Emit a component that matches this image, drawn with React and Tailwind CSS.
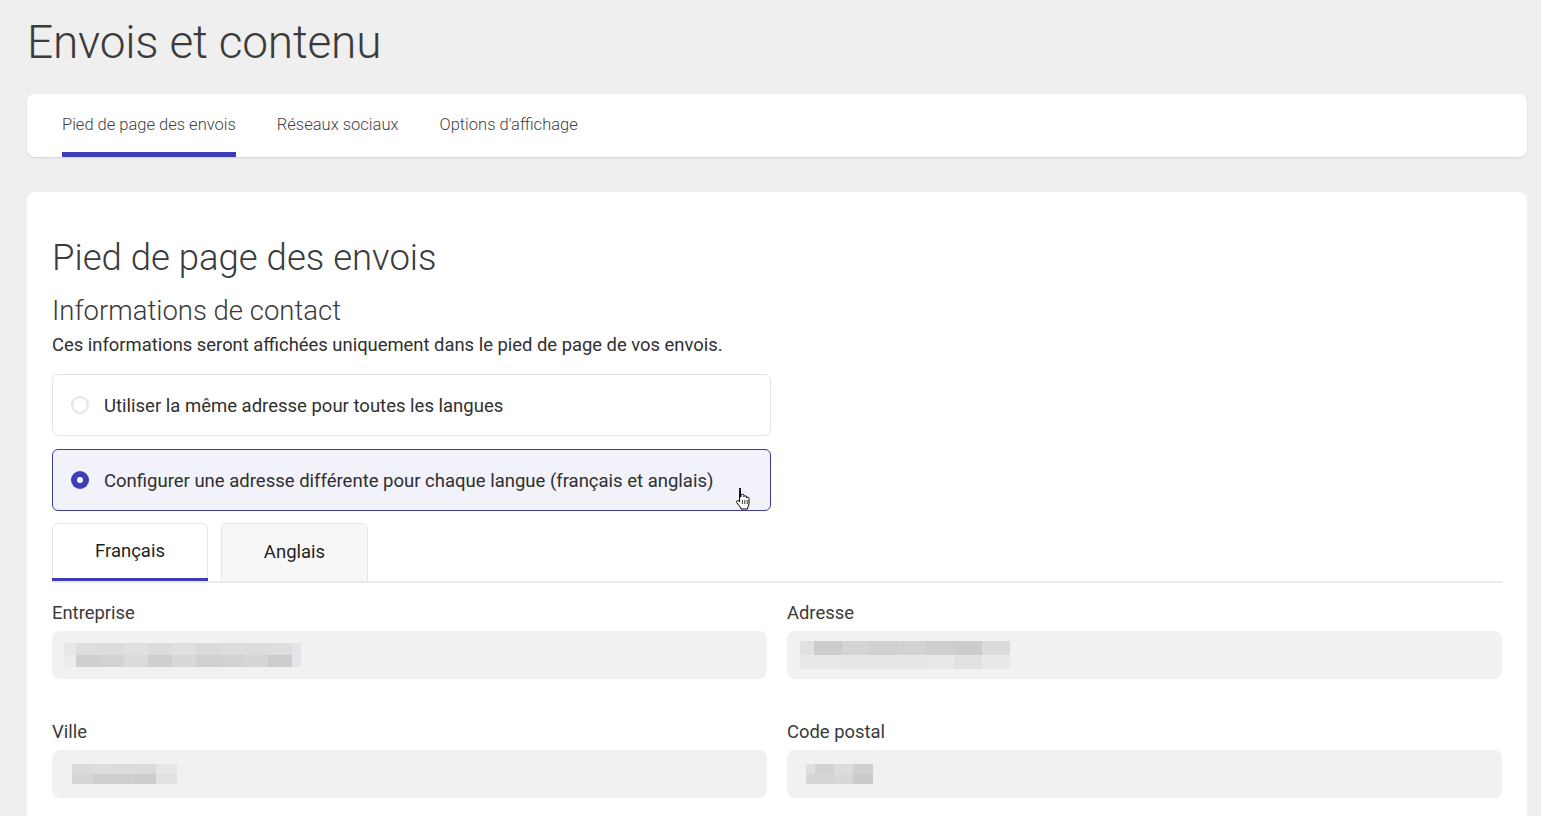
import React from 'react';

const font = { fontFamily: 'Roboto, "Liberation Sans", sans-serif' };

// pixelated placeholder blocks (blurred values in the screenshot)
const Pixels = ({ rows, widths, h = 12 }) => (
  <div className="flex flex-col">
    {rows.map((row, i) => (
      <div key={i} className="flex">
        {row.map((c, j) => (
          <div key={j} style={{ background: c, width: widths[j], height: h }} />
        ))}
      </div>
    ))}
  </div>
);

const Field = ({ label, children }) => (
  <div className="flex flex-col">
    <label className="text-[18.4px] text-[#3a3a3a] leading-[22px] mb-[7px] mt-[1px]">{label}</label>
    <div className="h-[48px] rounded-[8px] bg-[#f1f1f1] flex items-center">{children}</div>
  </div>
);

const HandCursor = () => (
  <svg width="18" height="24" viewBox="0 0 18 24" className="absolute right-[18px] top-[37px]">
    <path
      d="M5 1.5c.9 0 1.5.6 1.5 1.5v7l.5-.2V8.5c0-.8.6-1.4 1.4-1.4s1.4.6 1.4 1.4v1.2c.2-.6.7-1 1.3-1 .8 0 1.4.6 1.4 1.4v.9c.2-.5.7-.8 1.2-.8.8 0 1.3.6 1.3 1.4v4.7c0 2.6-1.6 4.4-1.6 5.7V22H7v-1c-1-1.4-2.8-3.3-4.2-5.3-.6-.9-.3-1.8.5-2.1.6-.2 1.2 0 1.7.6l.6.8V3c0-.9.6-1.5 1.4-1.5z"
      fill="#fff"
      stroke="#000"
      strokeWidth="1"
      strokeLinejoin="round"
    />
    <path d="M8.4 13v4M10.8 13v4M13.2 13v4" stroke="#000" strokeWidth="0.8" />
  </svg>
);

export default function App() {
  return (
    <div className="min-h-screen bg-[#efefef] pl-[27px] pr-[14px] pt-[14px] pb-6" style={font}>
      <h1 className="text-[46px] font-light text-[#3b3b3b] leading-[56px] tracking-[-0.2px]">Envois et contenu</h1>

      {/* top tabs */}
      <div className="mt-[24px] bg-white rounded-[8px] shadow-[0_1px_2px_rgba(0,0,0,0.12)] h-[63px] flex items-end px-[35px] gap-[41px]">
        {['Pied de page des envois', 'Réseaux sociaux', "Options d'affichage"].map((t, i) => (
          <div
            key={t}
            className={`h-full flex items-center pt-[4px] text-[16.5px] font-light text-[#3f3f3f] border-b-[5px] ${
              i === 0 ? 'border-[#3d3cb9]' : 'border-transparent'
            }`}
          >
            {t}
          </div>
        ))}
      </div>

      {/* main card */}
      <div className="mt-[35px] bg-white rounded-[8px] px-[25px] pt-[44px] pb-8">
        <h2 className="text-[36.5px] font-light text-[#3b3b3b] leading-[44px]">Pied de page des envois</h2>
        <h3 className="mt-[15px] text-[27.5px] font-light text-[#3b3b3b] leading-[32px]">Informations de contact</h3>
        <p className="mt-[6px] text-[18.4px] text-[#2f2f2f] leading-[24px]">
          Ces informations seront affichées uniquement dans le pied de page de vos envois.
        </p>

        <div className="mt-[17px] w-[719px] flex flex-col gap-[13px]">
          <div className="h-[62px] rounded-[6px] border border-[#e3e3e3] flex items-center px-[18px] gap-[15px]">
            <span className="w-[18px] h-[18px] rounded-full border-2 border-[#e4e4e4]" />
            <span className="text-[18.5px] text-[#2f2f2f] pt-[4px]">Utiliser la même adresse pour toutes les langues</span>
          </div>
          <div className="relative h-[62px] rounded-[6px] border border-[#3d3c99] bg-[#f2f2fb] flex items-center px-[18px] gap-[15px]">
            <span className="w-[18px] h-[18px] rounded-full bg-[#3d3cb9] flex items-center justify-center">
              <span className="w-[6px] h-[6px] rounded-full bg-white" />
            </span>
            <span className="text-[18.5px] text-[#2f2f2f] pt-[4px]">
              Configurer une adresse différente pour chaque langue (français et anglais)
            </span>
            <HandCursor />
          </div>
        </div>

        {/* language tabs */}
        <div className="mt-[12px] flex gap-[13px] border-b-2 border-[#ebebeb]">
          <div className="w-[156px] h-[58px] rounded-t-[6px] border border-b-0 border-[#e6e6e6] bg-white flex flex-col">
            <div className="flex-1 flex items-center justify-center pt-[1px] text-[18.5px] text-[#1f1f1f]">Français</div>
            <div className="h-[3px] bg-[#3d3cb9] -mx-px" />
          </div>
          <div className="w-[147px] h-[58px] rounded-t-[6px] border border-b-0 border-[#e6e6e6] bg-[#f7f7f7] flex items-center justify-center text-[18.5px] text-[#1f1f1f]">
            Anglais
          </div>
        </div>

        <div className="mt-[18px] grid grid-cols-2 gap-x-[20px] gap-y-[41px]">
          <Field label="Entreprise">
            <div className="pl-[12px]">
              <Pixels
                widths={[12, 24, 24, 24, 24, 24, 24, 24, 24, 24, 9]}
                rows={[
                  ['#e7e7e7', '#dedede', '#dcdcdc', '#dfe0e0', '#dcdcdc', '#e0e0e0', '#dadada', '#dddddd', '#dcdcdc', '#dedede', '#e3e5ea'],
                  ['#ececec', '#cfcfcf', '#d3d3d3', '#dadbdb', '#cfcfcf', '#d8d8d8', '#d0d0d0', '#d2d2d2', '#d6d6d6', '#cccccc', '#e3e5ea'],
                ]}
              />
            </div>
          </Field>
          <Field label="Adresse">
            <div className="pl-[13px]">
              <Pixels
                widths={[14, 28, 28, 28, 28, 28, 28, 28]}
                h={14}
                rows={[
                  ['#e1e1e1', '#cccccc', '#d4d4d4', '#cfd0d0', '#d3d3d1', '#cfcfcf', '#cccccc', '#dadbdd'],
                  ['#e8e8e8', '#e8e8e8', '#e6e6e6', '#e6e6e6', '#e6e6e6', '#e8e8e8', '#e1e1e1', '#e8e8e8'],
                ]}
              />
            </div>
          </Field>
          <Field label="Ville">
            <div className="pl-[20px]">
              <Pixels
                widths={[21, 21, 21, 21, 21]}
                h={10}
                rows={[
                  ['#dadada', '#dddddd', '#dcdcdc', '#dbdbda', '#e6e6e6'],
                  ['#d6d6d6', '#cfcfcf', '#cfcfcf', '#cdcdcd', '#e0e1e3'],
                ]}
              />
            </div>
          </Field>
          <Field label="Code postal">
            <div className="pl-[19px]">
              <Pixels
                widths={[9, 19, 19, 20]}
                h={10}
                rows={[
                  ['#e0e0e0', '#d2d2d2', '#dcdcdc', '#d0d0d0'],
                  ['#d6d6d6', '#d6d6d6', '#d8d8d8', '#cbcbcb'],
                ]}
              />
            </div>
          </Field>
        </div>
      </div>
    </div>
  );
}
